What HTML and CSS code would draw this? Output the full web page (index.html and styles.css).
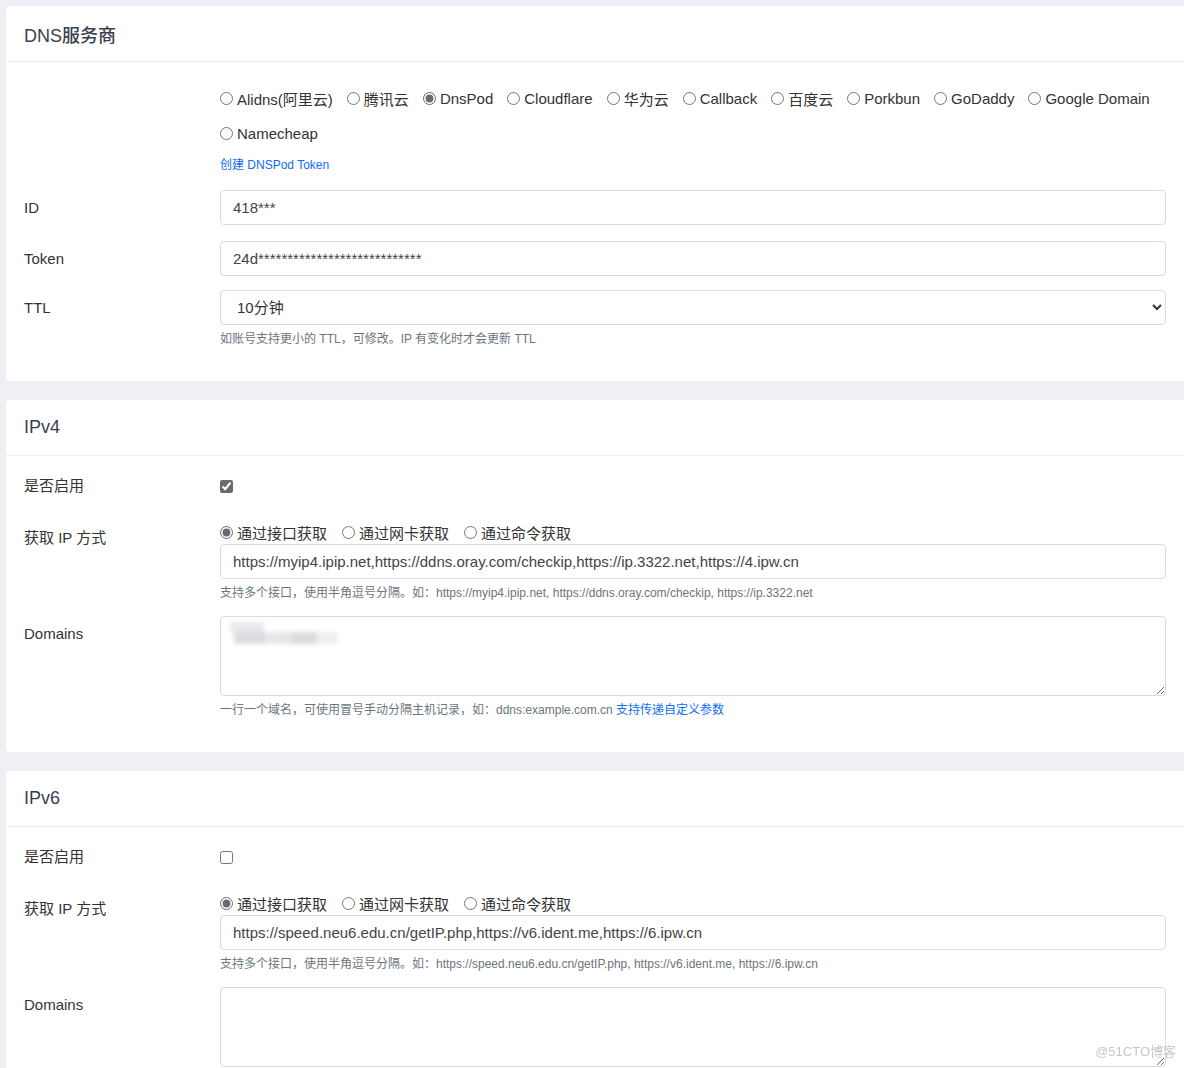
FILE: index.html
```html
<!DOCTYPE html>
<html lang="zh-CN">
<head>
<meta charset="utf-8">
<title>DDNS 设置</title>
<link rel="stylesheet" href="styles.css">
</head>
<body>
<div class="page">
  <section class="card">
    <div class="card-header">DNS服务商</div>
    <div class="card-body">
      <div class="form-row">
        <div class="form-label"></div>
        <div class="ctrl">
          <div class="radio-group providers">
            <label class="opt"><input type="radio" name="dns">Alidns(阿里云)</label>
            <label class="opt"><input type="radio" name="dns">腾讯云</label>
            <label class="opt"><input type="radio" name="dns" checked>DnsPod</label>
            <label class="opt"><input type="radio" name="dns">Cloudflare</label>
            <label class="opt"><input type="radio" name="dns">华为云</label>
            <label class="opt"><input type="radio" name="dns">Callback</label>
            <label class="opt"><input type="radio" name="dns">百度云</label>
            <label class="opt"><input type="radio" name="dns">Porkbun</label>
            <label class="opt"><input type="radio" name="dns">GoDaddy</label>
            <label class="opt"><input type="radio" name="dns">Google Domain</label>
            <label class="opt"><input type="radio" name="dns">Namecheap</label>
          </div>
          <a class="link token-link" href="#">创建 DNSPod Token</a>
        </div>
      </div>
      <div class="form-row">
        <label class="form-label">ID</label>
        <div class="ctrl"><input class="input" type="text" value="418***"></div>
      </div>
      <div class="form-row tight">
        <label class="form-label">Token</label>
        <div class="ctrl"><input class="input" type="text" value="24d****************************"></div>
      </div>
      <div class="form-row">
        <label class="form-label">TTL</label>
        <div class="ctrl">
          <select class="input select">
            <option>10分钟</option>
          </select>
          <div class="help">如账号支持更小的 TTL，可修改。IP 有变化时才会更新 TTL</div>
        </div>
      </div>
    </div>
  </section>

  <section class="card">
    <div class="card-header">IPv4</div>
    <div class="card-body">
      <div class="form-row">
        <label class="form-label">是否启用</label>
        <div class="ctrl check-cell"><input type="checkbox" checked></div>
      </div>
      <div class="form-row tight">
        <label class="form-label">获取 IP 方式</label>
        <div class="ctrl">
          <div class="radio-group methods">
            <label class="opt"><input type="radio" name="m4" checked>通过接口获取</label>
            <label class="opt"><input type="radio" name="m4">通过网卡获取</label>
            <label class="opt"><input type="radio" name="m4">通过命令获取</label>
          </div>
          <input class="input" type="text" value="https://myip4.ipip.net,https://ddns.oray.com/checkip,https://ip.3322.net,https://4.ipw.cn">
          <div class="help">支持多个接口，使用半角逗号分隔。如：https://myip4.ipip.net, https://ddns.oray.com/checkip, https://ip.3322.net</div>
        </div>
      </div>
      <div class="form-row tight">
        <label class="form-label">Domains</label>
        <div class="ctrl">
          <div class="area-wrap">
            <textarea class="input area"></textarea>
            <div class="redact"><span class="r1"></span><span class="r2"></span></div>
          </div>
          <div class="help">一行一个域名，可使用冒号手动分隔主机记录，如：ddns:example.com.cn <a class="link" href="#">支持传递自定义参数</a></div>
        </div>
      </div>
    </div>
  </section>

  <section class="card">
    <div class="card-header">IPv6</div>
    <div class="card-body">
      <div class="form-row">
        <label class="form-label">是否启用</label>
        <div class="ctrl check-cell"><input type="checkbox"></div>
      </div>
      <div class="form-row tight">
        <label class="form-label">获取 IP 方式</label>
        <div class="ctrl">
          <div class="radio-group methods">
            <label class="opt"><input type="radio" name="m6" checked>通过接口获取</label>
            <label class="opt"><input type="radio" name="m6">通过网卡获取</label>
            <label class="opt"><input type="radio" name="m6">通过命令获取</label>
          </div>
          <input class="input" type="text" value="https://speed.neu6.edu.cn/getIP.php,https://v6.ident.me,https://6.ipw.cn">
          <div class="help">支持多个接口，使用半角逗号分隔。如：https://speed.neu6.edu.cn/getIP.php, https://v6.ident.me, https://6.ipw.cn</div>
        </div>
      </div>
      <div class="form-row tight">
        <label class="form-label">Domains</label>
        <div class="ctrl">
          <textarea class="input area"></textarea>
        </div>
      </div>
    </div>
  </section>
</div>
<div class="watermark">@51CTO博客</div>
</body>
</html>
```

FILE: styles.css
```css
html, body {
  margin: 0;
  padding: 0;
}

body {
  background: #eef0f5;
  font-family: "Liberation Sans", "Noto Sans CJK SC", sans-serif;
  color: #333;
  overflow: hidden;
}

.page {
  padding: 6px 0 0 6px;
}

.card {
  background: #fff;
  border-radius: 4px 0 0 4px;
  margin-bottom: 19px;
}

.card-header {
  height: 55px;
  display: flex;
  align-items: center;
  padding: 0 18px;
  border-bottom: 1px solid #eceef2;
  font-size: 18px;
  font-weight: 500;
  color: #3a3f4e;
}

.card-body {
  padding: 12px 18px 18px;
}

.form-row {
  display: grid;
  grid-template-columns: 196px 1fr;
  margin-bottom: 16px;
}

.form-row.tight {
  margin-bottom: 14px;
}

.form-row:last-child {
  margin-bottom: 15px;
}

.form-label {
  font-size: 15px;
  line-height: 22px;
  padding-top: 7px;
  color: #333;
}

.ctrl {
  min-width: 0;
  display: flex;
  flex-direction: column;
}

.radio-group {
  display: flex;
  flex-wrap: wrap;
  column-gap: 15px;
}

.providers {
  padding-top: 7px;
  column-gap: 14px;
}

.opt {
  display: inline-flex;
  align-items: center;
  gap: 4px;
  font-size: 15px;
  color: #333;
  white-space: nowrap;
}

.providers .opt {
  height: 35px;
}

.methods .opt {
  height: 24px;
}

.opt input[type="radio"] {
  margin: 0;
  width: 13px;
  height: 13px;
  accent-color: #6b6b6b;
}

.link {
  color: #0d6efd;
  text-decoration: none;
}

.token-link {
  font-size: 12px;
  line-height: 18px;
  margin-top: 5px;
  align-self: flex-start;
}

.input {
  box-sizing: border-box;
  width: 100%;
  height: 35px;
  margin: 0;
  border: 1px solid #d8dce3;
  border-radius: 4px;
  padding: 0 12px;
  font-family: inherit;
  font-size: 15px;
  color: #444;
  background: #fff;
  outline: none;
}

.select {
  color: #333;
}

.area {
  height: 80px;
  padding: 6px 12px;
  resize: vertical;
  display: block;
}

.area-wrap {
  position: relative;
}

.redact {
  position: absolute;
  left: 8px;
  top: 6px;
  filter: blur(2px);
}

.redact span {
  display: block;
  background: #e2e3e6;
}

.redact .r1 {
  width: 34px;
  height: 10px;
  margin-left: 2px;
  background: #e9eaec;
}

.redact .r2 {
  width: 104px;
  height: 12px;
  margin-left: 6px;
  background: linear-gradient(90deg, #dcdde0 0 30%, #e6e7e9 30% 55%, #dadbde 55% 80%, #eeeff0 80% 100%);
}

.help {
  font-size: 12px;
  line-height: 18px;
  margin-top: 5px;
  color: #6c757d;
  white-space: nowrap;
}

.check-cell {
  height: 36px;
  justify-content: center;
}

.check-cell input[type="checkbox"] {
  margin: 0;
  width: 13px;
  height: 13px;
  accent-color: #6b6b6b;
}

.watermark {
  position: fixed;
  right: 8px;
  bottom: 8px;
  font-size: 13px;
  line-height: 16px;
  color: #c8c8c8;
}
```
